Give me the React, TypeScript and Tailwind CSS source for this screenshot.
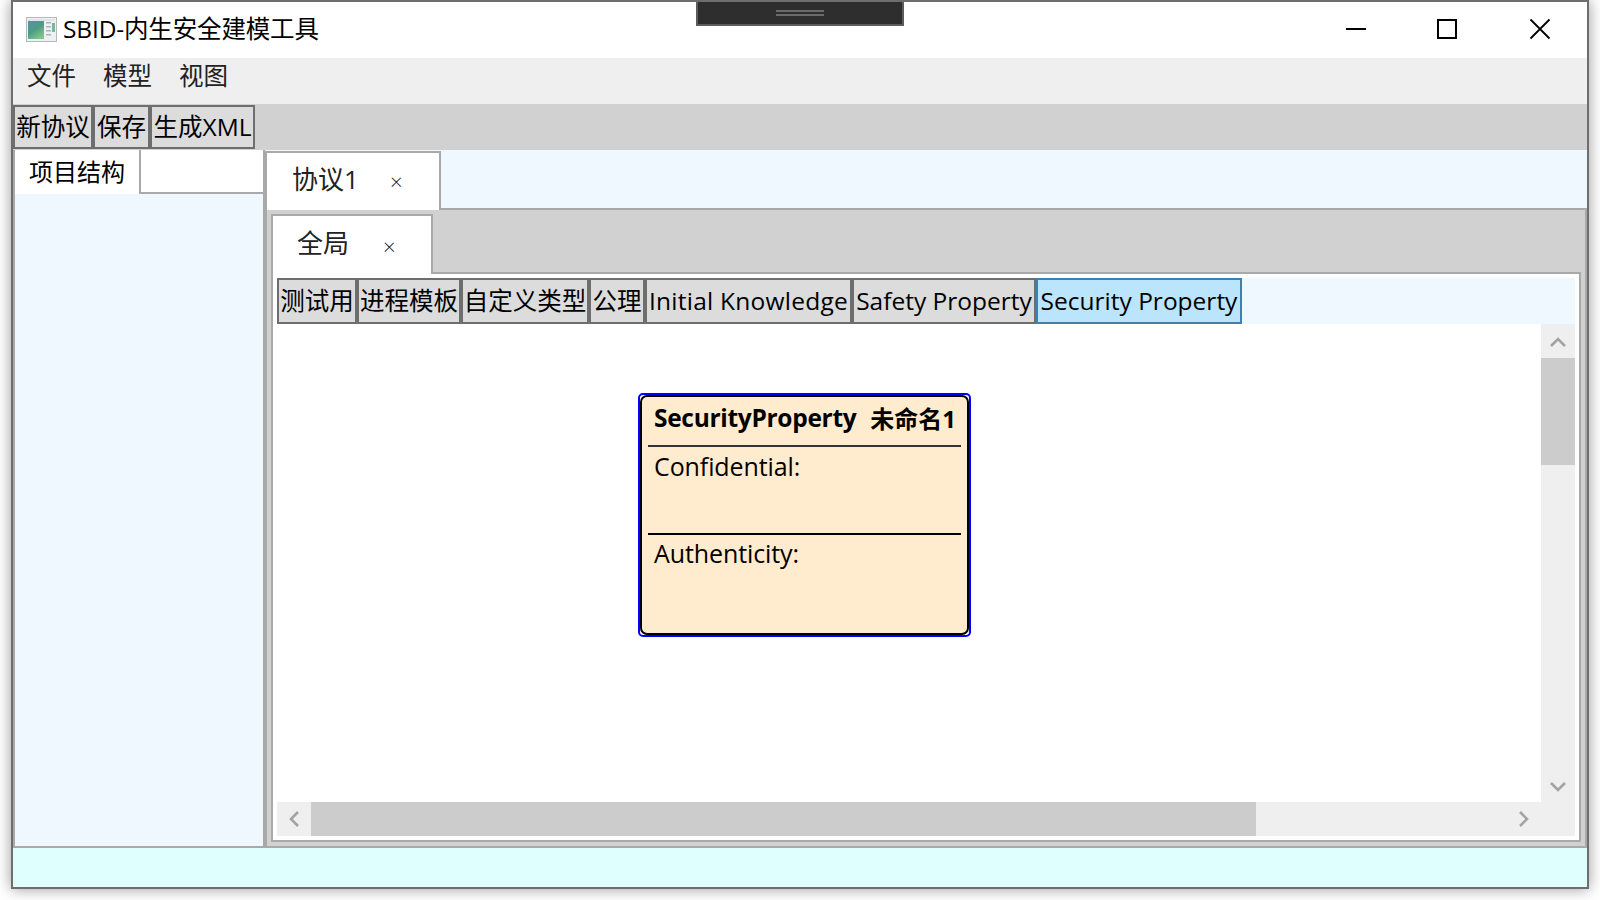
import { ReactNode } from 'react';

const FONT = "font-['Open_Sans','Noto_Sans_CJK_SC',sans-serif]";

function AppIcon() {
  return (
    <svg width="31" height="25" viewBox="0 0 31 25" className="shrink-0">
      <defs>
        <linearGradient id="pane" x1="0" y1="0" x2="0.6" y2="1">
          <stop offset="0" stopColor="#5b8fa8" />
          <stop offset="0.55" stopColor="#4f9c84" />
          <stop offset="1" stopColor="#7cc58c" />
        </linearGradient>
      </defs>
      <rect x="0.5" y="0.5" width="30" height="24" fill="#eef1f2" stroke="#b4b9bc" />
      <rect x="2" y="2" width="27" height="2" fill="#dfe5e8" />
      <rect x="2" y="4" width="16" height="18" fill="url(#pane)" />
      <rect x="20" y="5" width="5" height="1.5" fill="#a8b4ba" />
      <rect x="20" y="9" width="5" height="1.5" fill="#a8b4ba" />
      <rect x="20" y="13" width="5" height="1.5" fill="#a8b4ba" />
      <rect x="20" y="17" width="5" height="1.5" fill="#a8b4ba" />
      <rect x="26" y="6" width="3" height="9" fill="#7fb59a" />
    </svg>
  );
}

function ToolButton({ children, active, w }: { children: ReactNode; active?: boolean; w: string }) {
  return (
    <div
      className={`flex h-full shrink-0 items-center justify-center whitespace-nowrap border-2 text-[24.5px] text-black ${w} ${
        active ? 'border-[#3f80b3] bg-[#bbe4fd]' : 'border-[#6e6e6e] bg-[#dcdcdc]'
      }`}
    >
      {children}
    </div>
  );
}

function Chevron({ d, className }: { d: string; className?: string }) {
  return (
    <svg width="34" height="34" viewBox="0 0 34 34" className={`shrink-0 ${className ?? ''}`}>
      <path d={d} fill="none" stroke="#a3a3a3" strokeWidth="2.6" />
    </svg>
  );
}

function SecurityCard() {
  return (
    <div className="absolute left-[361px] top-[69px] h-[244px] w-[333px] rounded-[5px] border-2 border-[#0000ff]">
      <div className="flex h-full flex-col rounded-[7px] border-2 border-black bg-[#ffebcd] px-[6px]">
        <div className="flex h-[50px] shrink-0 items-center justify-between border-b-2 border-[#333] pb-[5px] pl-[6px] pr-[5px] text-[25px] font-bold text-black">
          <span className="text-[24.5px] tracking-[-0.3px]">SecurityProperty</span>
          <span className="text-[24px]">未命名1</span>
        </div>
        <div className="h-[88px] shrink-0 border-b-2 border-black pl-[6px] text-[25px] leading-[38px] tracking-[-0.1px] text-black">
          Confidential:
        </div>
        <div className="pl-[6px] text-[25px] leading-[37px] tracking-[-0.1px] text-black">Authenticity:</div>
      </div>
    </div>
  );
}

export default function App() {
  return (
    <div className={`h-[900px] w-[1600px] overflow-hidden bg-white pl-[11px] ${FONT}`}>
      <div className="relative flex h-[889px] w-[1578px] flex-col border-2 border-[#6e6e6e] bg-white shadow-[0_0_14px_rgba(0,0,0,0.4)]">
        {/* drag handle over the title bar */}
        <div className="absolute left-[683px] top-0 flex h-[24px] w-[208px] flex-col items-center gap-[2px] border-x-2 border-b-2 border-[#5c5c5c] bg-[#2e2e2e] pt-[8px]">
          <div className="h-[2px] w-[48px] bg-[#6a6a6a]" />
          <div className="h-[2px] w-[48px] bg-[#6a6a6a]" />
        </div>

        {/* title bar */}
        <div className="flex h-[56px] shrink-0 items-center pb-[2px] pl-[13px] text-[24.5px] tracking-[-0.15px] text-black">
          <AppIcon />
          <span className="ml-[6px]">SBID-内生安全建模工具</span>
          <div className="ml-auto flex items-center pr-[37px]">
            <svg width="203" height="20" viewBox="0 0 203 20" className="overflow-visible">
              <path d="M-1 10h20" stroke="#000" strokeWidth="2" />
              <rect x="91" y="1" width="18" height="18" fill="none" stroke="#000" strokeWidth="2" />
              <path d="M183.5 0.500L202.500 19.500M202.500 0.500L183.500 19.500" stroke="#000" strokeWidth="1.800" fill="none" />
            </svg>
          </div>
        </div>

        {/* menu */}
        <div className="flex h-[46px] shrink-0 items-center gap-[27px] bg-[#efefef] pb-[10px] pl-[14px] text-[24.5px] text-[#222]">
          <span>文件</span>
          <span>模型</span>
          <span>视图</span>
        </div>

        {/* toolbar */}
        <div className="flex h-[46px] shrink-0 bg-[#d1d1d1] py-px">
          <ToolButton w="w-[80px]">新协议</ToolButton>
          <ToolButton w="w-[57px]">保存</ToolButton>
          <ToolButton w="w-[105px]">生成XML</ToolButton>
        </div>

        {/* main */}
        <div className="flex min-h-0 flex-1">
          {/* project tree */}
          <div className="flex w-[252px] shrink-0 flex-col border-x-2 border-b-2 border-[#a9a9a9] bg-[#eff7ff]">
            <div className="flex h-[44px] shrink-0 bg-white">
              <div className="flex w-[126px] items-start border-r-2 border-[#a9a9a9] pl-[14px] pt-[4px] text-[24px] text-black">
                项目结构
              </div>
              <div className="flex-1 border-b-2 border-[#a9a9a9]" />
            </div>
          </div>

          {/* protocol tabs */}
          <div className="flex min-w-0 flex-1 flex-col">
            <div className="flex h-[60px] shrink-0 bg-[#eff7ff]">
              <div className="mt-px flex w-[176px] items-center border-x-2 border-t-2 border-[#a9a9a9] bg-white pb-[5px] pl-[25px] text-[26px] text-[#222]">
                <span>协议1</span>
                <span className="ml-[31px] mt-[4px] text-[22px] font-light leading-none">×</span>
              </div>
              <div className="flex-1 border-b-2 border-[#a9a9a9]" />
            </div>
            <div className="flex min-h-0 flex-1 flex-col border-x-2 border-b-2 border-[#a9a9a9] bg-[#d1d1d1] px-[4px] pb-[4px]">
              {/* inner tabs */}
              <div className="flex h-[64px] shrink-0 pt-[4px]">
                <div className="flex w-[162px] items-center border-x-2 border-t-2 border-[#a9a9a9] bg-white pb-[3px] pl-[24px] text-[26px] text-[#222]">
                  <span>全局</span>
                  <span className="ml-[34px] mt-[4px] text-[22px] font-light leading-none">×</span>
                </div>
                <div className="flex-1 border-b-2 border-[#a9a9a9]" />
              </div>
              <div className="flex min-h-0 flex-1 flex-col border-x-2 border-b-2 border-[#a9a9a9] bg-white p-[4px]">
                <div className="flex h-[46px] shrink-0 bg-[#eff7ff]">
                  <ToolButton w="w-[80px]">测试用</ToolButton>
                  <ToolButton w="w-[104px]">进程模板</ToolButton>
                  <ToolButton w="w-[128px]">自定义类型</ToolButton>
                  <ToolButton w="w-[56px]">公理</ToolButton>
                  <ToolButton w="w-[207px]">
                    <span className="tracking-[0.25px]">Initial Knowledge</span>
                  </ToolButton>
                  <ToolButton w="w-[184px]">Safety Property</ToolButton>
                  <ToolButton w="w-[206px]" active>
                    Security Property
                  </ToolButton>
                </div>
                <div className="flex min-h-0 flex-1">
                  <div className="relative min-w-0 flex-1 bg-white">
                    <SecurityCard />
                  </div>
                  {/* vertical scrollbar */}
                  <div className="flex w-[34px] shrink-0 flex-col bg-[#efefef]">
                    <Chevron d="M10 22L17 15L24 22" />
                    <div className="h-[107px] shrink-0 bg-[#cccccc]" />
                    <Chevron d="M10 15L17 22L24 15" className="mt-auto" />
                  </div>
                </div>
                {/* horizontal scrollbar */}
                <div className="flex h-[34px] shrink-0 bg-[#efefef]">
                  <Chevron d="M21 10L14 17L21 24" />
                  <div className="w-[945px] shrink-0 bg-[#cccccc]" />
                  <Chevron d="M14 10L21 17L14 24" className="ml-[250px]" />
                </div>
              </div>
            </div>
          </div>
        </div>

        {/* status bar */}
        <div className="h-[39px] shrink-0 bg-[#dfffff]" />
      </div>
    </div>
  );
}
